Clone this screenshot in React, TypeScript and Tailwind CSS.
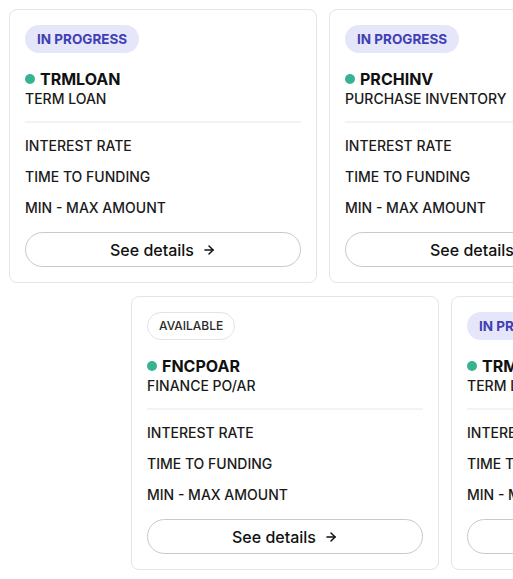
import { ArrowRight } from "lucide-react";

type Product = {
  status: "progress" | "available";
  code: string;
  name: string;
};

const rowOne: Product[] = [
  { status: "progress", code: "TRMLOAN", name: "TERM LOAN" },
  { status: "progress", code: "PRCHINV", name: "PURCHASE INVENTORY" },
];

const rowTwo: Product[] = [
  { status: "available", code: "FNCPOAR", name: "FINANCE PO/AR" },
  { status: "progress", code: "TRMLOAN", name: "TERM LOAN" },
];

function StatusBadge({ status }: { status: Product["status"] }) {
  if (status === "progress") {
    return (
      <span className="inline-flex h-7 items-center rounded-full bg-[#e6e6fb] px-3 text-[13.5px] font-bold text-[#3f3fb3]">
        IN PROGRESS
      </span>
    );
  }
  return (
    <span className="inline-flex h-7 items-center rounded-full border border-[#e3e3e3] bg-white px-[11px] text-[12px] font-medium text-[#2a2a2a]">
      AVAILABLE
    </span>
  );
}

function ProductCard({ product }: { product: Product }) {
  return (
    <article className="flex w-[308px] shrink-0 flex-col rounded-lg border border-[#e4e4e4] bg-white p-[15px]">
      {/* Header */}
      <div className="flex">
        <StatusBadge status={product.status} />
      </div>
      <div className="mt-4 flex items-center gap-[5px]">
        <span className="h-[10px] w-[10px] rounded-full bg-[#37b392]" />
        <span className="text-[16px] leading-5 font-bold text-[#111]">
          {product.code}
        </span>
      </div>
      <div className="text-sm leading-5 font-medium text-[#1a1a1a]">
        {product.name}
      </div>

      <div className="mt-3 h-[2px] bg-[#f3f3f3]" />

      {/* Terms */}
      <div className="mt-[13px] flex flex-col gap-[11px] text-sm leading-5 font-medium text-[#1a1a1a]">
        <span>INTEREST RATE</span>
        <span>TIME TO FUNDING</span>
        <span>MIN - MAX AMOUNT</span>
      </div>

      <button className="mt-[14px] flex h-[35px] items-center justify-center gap-2 rounded-full border border-[#c9c9c9] bg-white text-base font-medium text-[#111]">
        See details
        <ArrowRight size={14} strokeWidth={2.5} />
      </button>
    </article>
  );
}

export default function App() {
  return (
    <div className="h-[579px] w-[513px] overflow-hidden bg-white pt-[9px] pl-[9px] font-['Inter',sans-serif]">
      <div className="flex gap-3">
        {rowOne.map((p, i) => (
          <ProductCard key={i} product={p} />
        ))}
      </div>
      <div className="mt-[13px] flex gap-3 pl-[122px]">
        {rowTwo.map((p, i) => (
          <ProductCard key={i} product={p} />
        ))}
      </div>
    </div>
  );
}
